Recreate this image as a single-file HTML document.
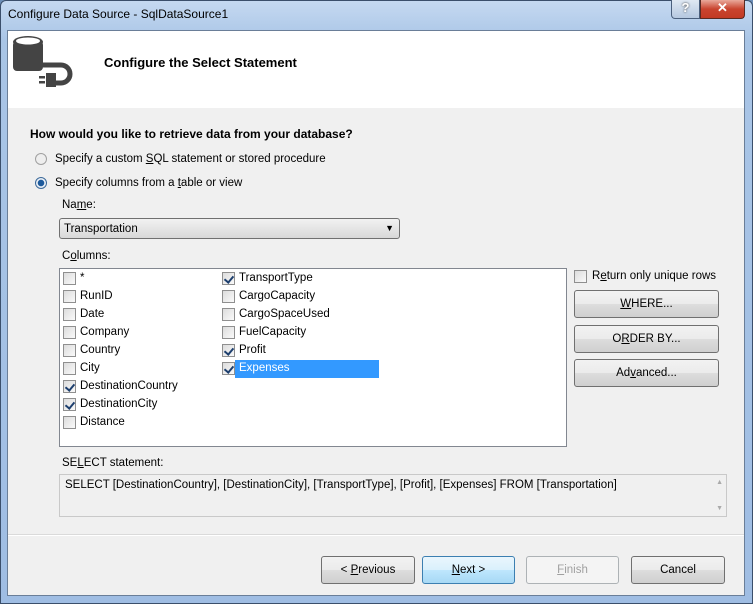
<!DOCTYPE html><html><head><style>
*{box-sizing:border-box;margin:0;padding:0}
body{width:753px;height:604px;overflow:hidden;background:#6d8fb8;font-family:"Liberation Sans",sans-serif;font-size:11.5px;color:#000;position:relative}
.frame{position:absolute;left:0;top:0;width:753px;height:604px;background:linear-gradient(#c5d9f1,#a9c5e6 40px,#9fbde3);border:1px solid #3b4f6b;border-radius:6px 6px 0 0}
.a{position:absolute;white-space:nowrap}
.client{position:absolute;left:7px;top:30px;width:738px;height:566px;background:#f0f0f0;border:1px solid #6a7e98}
.hdr{position:absolute;left:0;top:0;width:736px;height:77px;background:#fff}
.btn{position:absolute;height:28px;border:1px solid #707070;border-radius:3px;background:linear-gradient(#f2f2f2,#ebebeb 50%,#dddddd 51%,#cfcfcf);text-align:center;line-height:26px}
.cb{position:absolute;width:13px;height:13px;border:1px solid #8f8f8f;background:linear-gradient(135deg,#dcdcdc,#fafafa)}
.cb.on::after{content:"";position:absolute;left:3px;top:1px;width:4px;height:7px;border:solid #1d3f6e;border-width:0 2px 2px 0;transform:rotate(40deg)}
.l{position:absolute;white-space:nowrap}
u{text-decoration:underline}
</style></head><body>
<div class="frame"></div>
<div class="a" style="left:8px;top:7px;font-size:12px">Configure Data Source - SqlDataSource1</div>
<div class="a" style="left:671px;top:0;width:29px;height:19px;border:1px solid #4a5f7d;border-top:0;border-radius:0 0 0 4px;background:linear-gradient(#dfe8f3,#b5c8e0);text-align:center;color:#fff;font-weight:bold;font-size:13px;text-shadow:0 0 2px #333">?</div>
<div class="a" style="left:700px;top:0;width:45px;height:19px;border:1px solid #5a2a22;border-top:0;border-radius:0 0 4px 0;background:linear-gradient(#e9a99b,#c9442f 50%,#c23a24);text-align:center;color:#fff;font-weight:bold;font-size:13px">✕</div>
<div class="client">
<div class="hdr"></div>
<svg class="a" style="left:3px;top:4px" width="68" height="56" viewBox="0 0 68 56">
<rect x="2" y="6" width="30" height="30" rx="4" fill="#444"/><ellipse cx="17" cy="7" rx="15" ry="6" fill="#444"/><ellipse cx="17" cy="6" rx="12" ry="3.5" fill="#fff"/>
<path d="M32 30 H50 a9 9 0 0 1 0 18 H44" stroke="#444" stroke-width="5" fill="none"/>
<rect x="35" y="38" width="10" height="14" fill="#444"/><rect x="28" y="41" width="6" height="2.5" fill="#444"/><rect x="28" y="46" width="6" height="2.5" fill="#444"/>
</svg>
<div class="a" style="left:96px;top:24px;font-weight:bold;font-size:13px">Configure the Select Statement</div>
<div class="a" style="left:22px;top:96px;font-weight:bold;font-size:12px">How would you like to retrieve data from your database?</div>
<div class="a" style="left:27px;top:122px;width:12px;height:12px;border-radius:50%;border:1px solid #a0a0a0;background:#eee"></div>
<div class="a" style="left:47px;top:122px">Specify a custom <u>S</u>QL statement or stored procedure</div>
<div class="a" style="left:27px;top:146px;width:12px;height:12px;border-radius:50%;border:1px solid #3d6a9a;background:radial-gradient(circle,#1d5a9c 0 3px,#e8eef5 3.5px)"></div>
<div class="a" style="left:47px;top:146px">Specify columns from a <u>t</u>able or view</div>
<div class="a" style="left:54px;top:168px">Na<u>m</u>e:</div>
<div class="a" style="left:51px;top:187px;width:341px;height:21px;border:1px solid #707070;border-radius:3px;background:linear-gradient(#f2f2f2,#e5e5e5 50%,#d8d8d8);padding:4px 4px">Transportation<span style="position:absolute;right:5px;top:4px;font-size:9px">▼</span></div>
<div class="a" style="left:54px;top:219px">C<u>o</u>lumns:</div>
<div class="a" style="left:51px;top:237px;width:508px;height:179px;background:#fff;border:1px solid #828790"></div>
<div class="a" style="left:227px;top:329px;width:144px;height:18px;background:#3399ff"></div>
<div class="cb" style="left:55px;top:241px"></div><div class="l" style="left:72px;top:241px">*</div>
<div class="cb" style="left:55px;top:259px"></div><div class="l" style="left:72px;top:259px">RunID</div>
<div class="cb" style="left:55px;top:277px"></div><div class="l" style="left:72px;top:277px">Date</div>
<div class="cb" style="left:55px;top:295px"></div><div class="l" style="left:72px;top:295px">Company</div>
<div class="cb" style="left:55px;top:313px"></div><div class="l" style="left:72px;top:313px">Country</div>
<div class="cb" style="left:55px;top:331px"></div><div class="l" style="left:72px;top:331px">City</div>
<div class="cb on" style="left:55px;top:349px"></div><div class="l" style="left:72px;top:349px">DestinationCountry</div>
<div class="cb on" style="left:55px;top:367px"></div><div class="l" style="left:72px;top:367px">DestinationCity</div>
<div class="cb" style="left:55px;top:385px"></div><div class="l" style="left:72px;top:385px">Distance</div>
<div class="cb on" style="left:214px;top:241px"></div><div class="l" style="left:231px;top:241px">TransportType</div>
<div class="cb" style="left:214px;top:259px"></div><div class="l" style="left:231px;top:259px">CargoCapacity</div>
<div class="cb" style="left:214px;top:277px"></div><div class="l" style="left:231px;top:277px">CargoSpaceUsed</div>
<div class="cb" style="left:214px;top:295px"></div><div class="l" style="left:231px;top:295px">FuelCapacity</div>
<div class="cb on" style="left:214px;top:313px"></div><div class="l" style="left:231px;top:313px">Profit</div>
<div class="cb on" style="left:214px;top:331px"></div><div class="l" style="left:231px;top:331px;color:#fff">Expenses</div>
<div class="cb" style="left:566px;top:239px"></div><div class="l" style="left:584px;top:239px">R<u>e</u>turn only unique rows</div>
<div class="btn" style="left:566px;top:259px;width:145px"><u>W</u>HERE...</div>
<div class="btn" style="left:566px;top:294px;width:145px">O<u>R</u>DER BY...</div>
<div class="btn" style="left:566px;top:328px;width:145px">Ad<u>v</u>anced...</div>
<div class="a" style="left:54px;top:426px">SE<u>L</u>ECT statement:</div>
<div class="a" style="left:51px;top:443px;width:668px;height:43px;border:1px solid #c9c9c9;background:#f0f0f0;padding:4px 5px">SELECT [DestinationCountry], [DestinationCity], [TransportType], [Profit], [Expenses] FROM [Transportation]<span style="position:absolute;right:3px;top:4px;font-size:7px;color:#aaa">▲</span><span style="position:absolute;right:3px;bottom:4px;font-size:7px;color:#aaa">▼</span></div>
<div class="a" style="left:0;top:504px;width:736px;height:1px;background:#fff"></div>
<div class="a" style="left:0;top:503px;width:736px;height:1px;background:#dadada"></div>
<div class="btn" style="left:313px;top:525px;width:94px">&lt; <u>P</u>revious</div>
<div class="btn" style="left:414px;top:525px;width:93px;border-color:#3c7fb1;background:linear-gradient(#eaf6fd,#d9f0fc 50%,#bee6fd 51%,#a7d9f5)"><u>N</u>ext &gt;</div>
<div class="btn" style="left:518px;top:525px;width:93px;border-color:#adb2b5;background:#f4f4f4;color:#a0a0a0"><u>F</u>inish</div>
<div class="btn" style="left:623px;top:525px;width:94px">Cancel</div>
</div>
</body></html>
